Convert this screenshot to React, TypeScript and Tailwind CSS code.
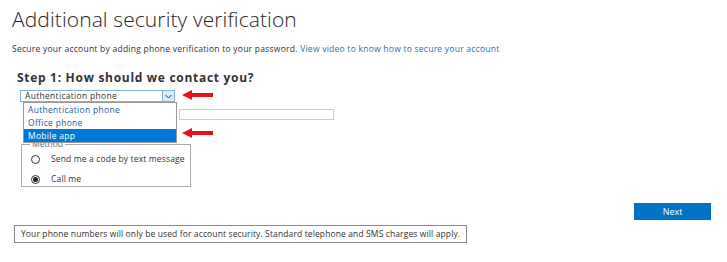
import React from 'react';

function RedArrow() {
  return (
    <svg width="32" height="10" viewBox="0 0 32 10">
      <polygon points="0,5 10,0 10,3 31,3 31,7 10,7 10,10" fill="#e3121b" />
    </svg>
  );
}

function Radio({ checked }: { checked?: boolean }) {
  return (
    <span className="flex h-[9px] w-[9px] items-center justify-center rounded-full border border-[#333] bg-white">
      {checked && <span className="h-[5px] w-[5px] rounded-full bg-[#222]" />}
    </span>
  );
}

export default function App() {
  const options = ['Authentication phone', 'Office phone', 'Mobile app'];

  return (
    <div className="relative h-[262px] w-[727px] overflow-hidden bg-white font-['Open_Sans',sans-serif] text-[#333]">
      <h1 className="pl-[12px] pt-[6px] text-[21px] font-light leading-[27px] tracking-[0.1px] text-[#262626]">
        Additional security verification
      </h1>

      <p className="mt-[10px] pl-[12px] text-[8.5px] leading-[12px] tracking-[0.25px]">
        Secure your account by adding phone verification to your password.{' '}
        <a className="text-[#2a6ebb]">View video to know how to secure your account</a>
      </p>

      <h2 className="mt-[16px] pl-[17px] text-[12px] font-bold leading-[14px] tracking-[0.7px] text-[#333]">
        Step 1: How should we contact you?
      </h2>

      <div className="relative ml-[20px] mt-[5px] flex h-[12px] w-[155px] items-center border border-[#7fb1dc] bg-white">
        <span className="flex-1 pl-[4px] text-[8.5px] leading-[10px] tracking-[0.3px] text-[#333]">Authentication phone</span>
        <span className="flex h-[10px] w-[12px] items-center justify-center border-l border-[#7fb1dc] bg-[#dcecfc]">
          <svg width="7" height="5" viewBox="0 0 7 5">
            <polyline points="0.5,1 3.5,4 6.5,1" fill="none" stroke="#333" strokeWidth="1" />
          </svg>
        </span>

        <ul className="absolute left-[2px] top-[11px] z-10 w-[154px] border border-[#999] bg-white text-[8.5px] leading-[13px] tracking-[0.3px] text-[#2a5c8f]">
          {options.map((o, i) => (
            <li
              key={o}
              className={i === 2 ? 'bg-[#0078d7] pl-[4px] text-white' : 'pl-[4px]'}
            >
              {o}
            </li>
          ))}
        </ul>

        <span className="absolute left-[161px] top-[-1px]">
          <RedArrow />
        </span>
        <span className="absolute left-[161px] top-[37px] z-20">
          <RedArrow />
        </span>
      </div>

      <div className="ml-[179px] mt-[7px] h-[11px] w-[155px] border border-[#bcd0e0] bg-white" />

      <fieldset className="ml-[21px] mt-[20px] w-[170px] border border-[#aaa] pb-[1px]">
        <legend className="ml-[8px] px-[2px] text-[8.5px] leading-[8px] text-[#666]">Method</legend>
        <label className="flex items-center gap-[11px] pl-[9px] pt-[5px] text-[8.5px] leading-[12px] tracking-[0.15px]">
          <Radio />
          Send me a code by text message
        </label>
        <label className="flex items-center gap-[11px] pl-[9px] pt-[8px] text-[8.5px] leading-[12px] tracking-[0.15px]">
          <Radio checked />
          Call me
        </label>
      </fieldset>

      <div className="mt-[16px] flex justify-end pr-[16px]">
        <button className="h-[17px] w-[77px] bg-[#0072c6] text-[9px] leading-[17px] text-white">Next</button>
      </div>

      <div className="ml-[14px] mt-[5px] w-fit whitespace-nowrap border border-[#888] px-[6px] py-[3px] text-[8.5px] leading-[10px] tracking-[0.12px]">
        Your phone numbers will only be used for account security. Standard telephone and SMS charges will apply.
      </div>
    </div>
  );
}
